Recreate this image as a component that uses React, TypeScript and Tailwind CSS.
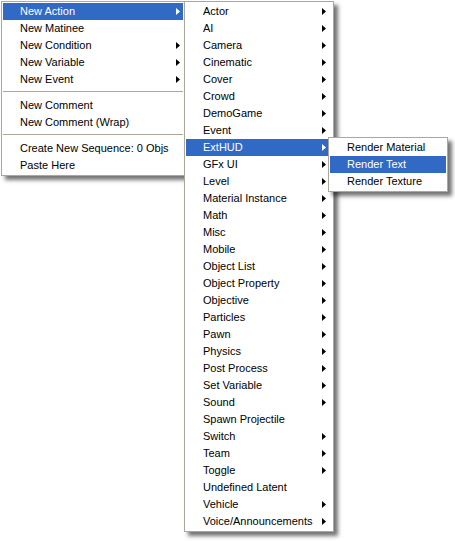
import React from "react";

// A menu entry: label, whether it opens a submenu, and whether it is highlighted
interface Item {
  label?: string;
  sub?: boolean;
  active?: boolean;
  sep?: boolean;
}

const mainItems: Item[] = [
  { label: "New Action", sub: true, active: true },
  { label: "New Matinee" },
  { label: "New Condition", sub: true },
  { label: "New Variable", sub: true },
  { label: "New Event", sub: true },
  { sep: true },
  { label: "New Comment" },
  { label: "New Comment (Wrap)" },
  { sep: true },
  { label: "Create New Sequence: 0 Objs" },
  { label: "Paste Here" },
];

const actionItems: Item[] = [
  { label: "Actor", sub: true },
  { label: "AI", sub: true },
  { label: "Camera", sub: true },
  { label: "Cinematic", sub: true },
  { label: "Cover", sub: true },
  { label: "Crowd", sub: true },
  { label: "DemoGame", sub: true },
  { label: "Event", sub: true },
  { label: "ExtHUD", sub: true, active: true },
  { label: "GFx UI", sub: true },
  { label: "Level", sub: true },
  { label: "Material Instance", sub: true },
  { label: "Math", sub: true },
  { label: "Misc", sub: true },
  { label: "Mobile", sub: true },
  { label: "Object List", sub: true },
  { label: "Object Property", sub: true },
  { label: "Objective", sub: true },
  { label: "Particles", sub: true },
  { label: "Pawn", sub: true },
  { label: "Physics", sub: true },
  { label: "Post Process", sub: true },
  { label: "Set Variable", sub: true },
  { label: "Sound", sub: true },
  { label: "Spawn Projectile" },
  { label: "Switch", sub: true },
  { label: "Team", sub: true },
  { label: "Toggle", sub: true },
  { label: "Undefined Latent" },
  { label: "Vehicle", sub: true },
  { label: "Voice/Announcements", sub: true },
];

const hudItems: Item[] = [
  { label: "Render Material" },
  { label: "Render Text", active: true },
  { label: "Render Texture" },
];

// Small solid triangle pointing right
const Arrow: React.FC<{ white?: boolean }> = ({ white }) => (
  <svg width="4" height="7" viewBox="0 0 4 7" className="block">
    <path d="M0 0 L4 3.5 L0 7 Z" fill={white ? "#ffffff" : "#000000"} />
  </svg>
);

const Menu: React.FC<{ items: Item[]; width: string; arrowPad: string }> = ({
  items,
  width,
  arrowPad,
}) => (
  <div
    className={`${width} bg-white border border-[#aca899] p-px shadow-[4px_4px_4px_rgba(0,0,0,0.55)]`}
  >
    {items.map((it, i) =>
      it.sep ? (
        <div key={i} className="h-[9px] pt-[3px]">
          <div className="h-px bg-[#aca899]" />
        </div>
      ) : (
        <div
          key={i}
          className={`flex items-center h-[17px] pl-[17px] ${arrowPad} ${
            it.active ? "bg-[#316ac5] text-white" : "text-black"
          }`}
        >
          <span className="flex-1 whitespace-nowrap leading-[17px]">{it.label}</span>
          {it.sub && <Arrow white={it.active} />}
        </div>
      )
    )}
  </div>
);

export default function App() {
  return (
    <div
      className="relative w-[455px] h-[541px] bg-white overflow-hidden text-[11px]"
      style={{ fontFamily: '"Liberation Sans", Arial, sans-serif' }}
    >
      {/* root context menu */}
      <div className="absolute left-px top-px">
        <Menu items={mainItems} width="w-[184px]" arrowPad="pr-[3px]" />
      </div>

      {/* New Action submenu */}
      <div className="absolute left-[184px] top-px">
        <Menu items={actionItems} width="w-[150px]" arrowPad="pr-[6px]" />
      </div>

      {/* ExtHUD submenu */}
      <div className="absolute left-[328px] top-[137px]">
        <Menu items={hudItems} width="w-[120px]" arrowPad="pr-[6px]" />
      </div>
    </div>
  );
}
